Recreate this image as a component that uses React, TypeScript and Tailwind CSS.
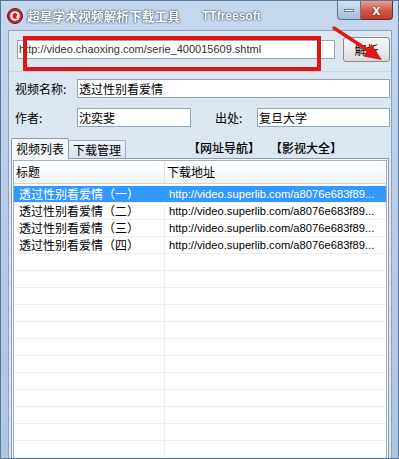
import React from 'react';

const cjk = '"Noto Sans CJK SC", "Liberation Sans", sans-serif';
const latin = '"Liberation Sans", "Noto Sans CJK SC", sans-serif';

const rows = [
  '透过性别看爱情（一）',
  '透过性别看爱情（二）',
  '透过性别看爱情（三）',
  '透过性别看爱情（四）',
];

const AppIcon = () => (
  <svg width="16" height="16" viewBox="0 0 16 16">
    <circle cx="8" cy="8" r="7.5" fill="#c0262b" stroke="#7a1115" strokeWidth="1" />
    <circle cx="8" cy="8" r="4.8" fill="#fff" />
    <path d="M5.5 6.5 L8 4.5 L10.5 6.5 L9 9.5 L11 11 L6 10.5 Z" fill="#c0262b" />
  </svg>
);

const Arrow = () => (
  <svg className="absolute left-0 top-0 pointer-events-none" width="399" height="459">
    <line x1="333" y1="27" x2="368" y2="50" stroke="#e01818" strokeWidth="3.5" strokeLinecap="round" />
    <polygon points="381,59 362.5,55.5 370.5,43" fill="#e01818" />
  </svg>
);

export default function App() {
  return (
    <div
      className="relative w-[399px] h-[459px] flex flex-col border border-[#5a7699] bg-gradient-to-b from-[#c5d8ee] via-[#b7cce6] to-[#aec5e0] overflow-hidden"
      style={{ fontFamily: cjk }}
    >
      {/* title bar */}
      <div className="h-[29px] flex items-start shrink-0">
        <div className="flex items-center h-[22px] mt-[4px] ml-[6px] gap-[4px]">
          <AppIcon />
          <span className="text-[12.75px] font-bold text-white [text-shadow:0_0_2px_#2b3b52,0_0_1px_#2b3b52]">超星学术视频解析下载工具</span>
          <span className="ml-[18px] text-[12px] font-bold text-white [text-shadow:0_0_2px_#2b3b52,0_0_1px_#2b3b52]" style={{ fontFamily: latin }}>TTfreesoft</span>
        </div>
        <div className="ml-auto mr-[5px] flex">
          <div className="w-[24px] h-[19px] rounded-bl-[4px] border border-t-0 border-[#5f7794] bg-gradient-to-b from-[#d7e3f1] to-[#a6bbd6] flex items-center justify-center">
            <div className="w-[10px] h-[3px] bg-white border border-[#6a7f98]" />
          </div>
          <div className="w-[32px] h-[19px] rounded-br-[4px] border border-t-0 border-l-0 border-[#6e2b25] bg-gradient-to-b from-[#e5a394] via-[#cf5a48] to-[#c33d2c] flex items-center justify-center">
            <span className="text-white font-bold text-[14px] leading-none [text-shadow:0_0_2px_#5a1a12]" style={{ fontFamily: latin }}>x</span>
          </div>
        </div>
      </div>

      {/* client */}
      <div className="flex-1 ml-[7px] mr-[6px] mb-[6px] border border-[#8aa3c0] bg-[#dce6f0] flex flex-col">
        {/* url row */}
        <div className="flex items-start pl-[8px] pt-[6px] h-[40px] shrink-0">
          <div className="mt-[3px] w-[318px] h-[19px] bg-white border border-[#8fa6bd] flex items-center pl-[1px] text-[11px] text-[#333]" style={{ fontFamily: latin }}>
            http://video.chaoxing.com/serie_400015609.shtml
          </div>
          <div className="ml-[8px] w-[47px] h-[25px] rounded-[3px] border border-[#8a8a8a] bg-gradient-to-b from-[#f6f6f6] via-[#ececec] to-[#d9d9d9] flex items-center justify-center text-[12px] text-black">
            解析
          </div>
        </div>

        {/* info panel */}
        <div className="flex-1 border-t border-[#c9d5e2] flex flex-col">
          <div className="flex items-center h-[19px] mt-[7px] pl-[6px] text-[12px] text-black">
            <span className="w-[62px]">视频名称:</span>
            <div className="flex-1 mr-[1px] h-[19px] bg-white border border-[#8fa6bd] flex items-center pl-[1px]">透过性别看爱情</div>
          </div>
          <div className="flex items-center h-[19px] mt-[10px] pl-[6px] text-[12px] text-black">
            <span className="w-[62px]">作者:</span>
            <div className="w-[114px] h-[19px] bg-white border border-[#8fa6bd] flex items-center pl-[1px]">沈奕斐</div>
            <span className="ml-[24px] w-[42px]">出处:</span>
            <div className="flex-1 mr-[1px] h-[19px] bg-white border border-[#8fa6bd] flex items-center pl-[1px]">复旦大学</div>
          </div>

          {/* tabs */}
          <div className="flex items-end h-[21px] mt-[10px] pl-[2px] text-[12px] text-black shrink-0">
            <div className="h-[21px] w-[58px] border border-b-0 border-[#8c9bb0] rounded-t-[2px] bg-[#f5f8fb] flex items-center justify-center relative top-[1px]">视频列表</div>
            <div className="h-[18px] w-[57px] border border-l-0 border-b-0 border-[#a3b0c2] rounded-t-[2px] bg-gradient-to-b from-[#eef2f7] to-[#d9e2ec] flex items-center justify-center">下载管理</div>
            <span className="ml-[62px] self-center font-medium">【网址导航】</span>
            <span className="ml-[10px] self-center font-medium">【影视大全】</span>
          </div>
          <div className="flex-1 mx-[2px] border border-[#8c9bb0] bg-[#f5f8fb] p-[1px] flex flex-col min-h-0">
            <div className="flex-1 border border-[#9fb1c6] bg-white flex flex-col overflow-hidden text-[12px]">
              <div className="flex h-[23px] shrink-0 border-b border-[#d5d5d5] bg-gradient-to-b from-white to-[#f1f3f6]">
                <div className="w-[151px] border-r border-[#dfe3e8] flex items-center pl-[2px]">标题</div>
                <div className="flex-1 flex items-center pl-[2px]">下载地址</div>
              </div>
              <div className="h-[2px] shrink-0" />
              {Array.from({ length: 17 }).map((_, i) => {
                const sel = i === 0;
                const title = rows[i];
                return (
                  <div
                    key={i}
                    className={`flex h-[17px] shrink-0 border-b border-[#eeeeee] ${sel ? 'bg-[#3399ff] text-white' : 'text-black'}`}
                  >
                    <div className={`w-[151px] pl-[5px] flex items-center border-r ${sel ? 'border-[#3399ff]' : 'border-[#eeeeee]'}`}>{title ?? ''}</div>
                    <div className="flex-1 pl-[4px] flex items-center text-[11.2px]" style={{ fontFamily: latin }}>
                      {title ? 'http://video.superlib.com/a8076e683f89...' : ''}
                    </div>
                  </div>
                );
              })}
            </div>
          </div>
        </div>
      </div>

      {/* annotation overlay */}
      <div className="absolute left-[22px] top-[35px] w-[298px] h-[35px] border-[4px] border-[#e01414] pointer-events-none" />
      <Arrow />
    </div>
  );
}
